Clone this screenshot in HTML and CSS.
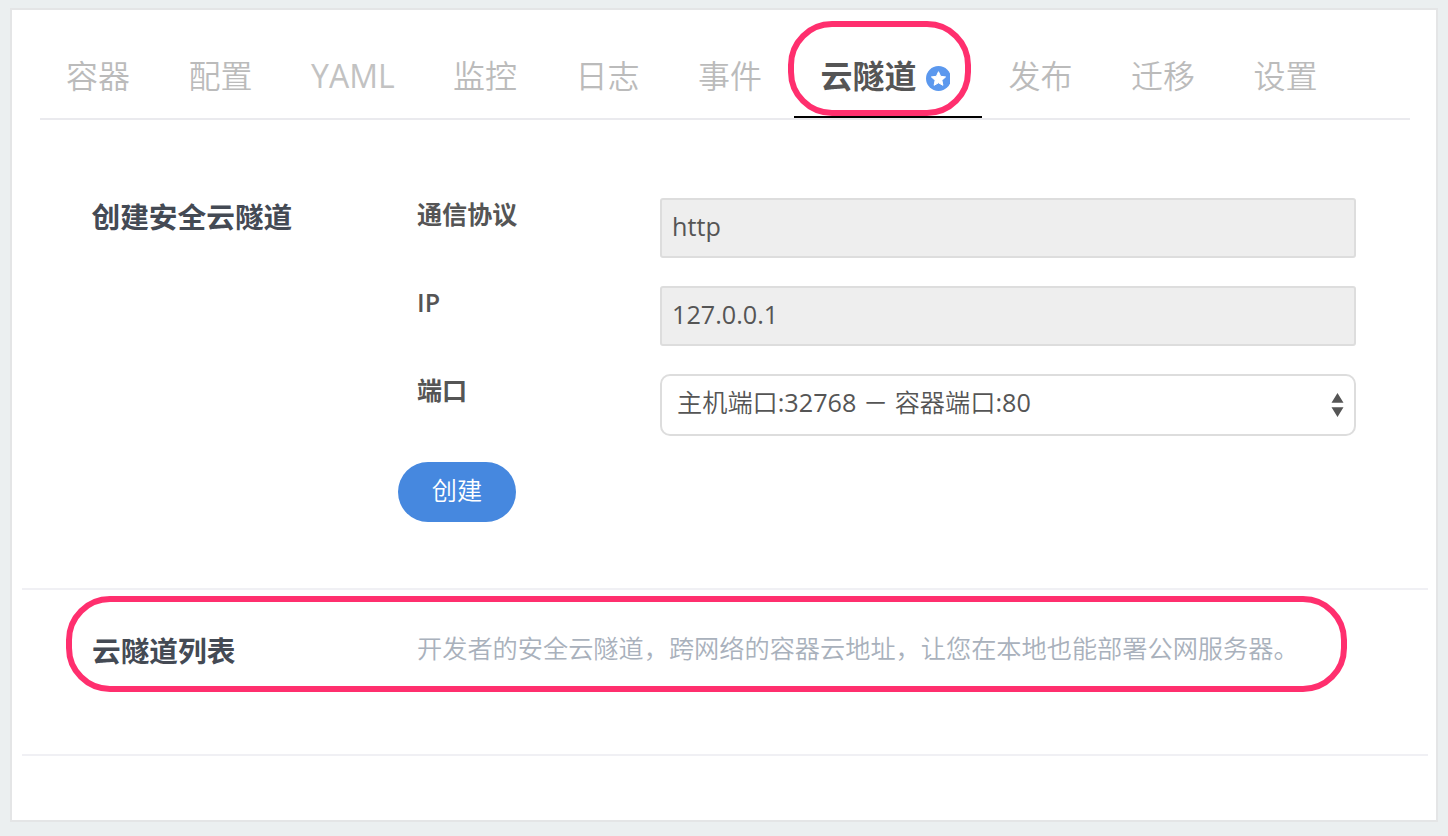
FILE: index.html
```html
<!DOCTYPE html>
<html lang="zh-CN">
<head>
<meta charset="utf-8">
<title>云隧道</title>
<link rel="stylesheet" href="styles.css">
</head>
<body>
<main class="panel">
  <nav class="tabs">
    <a class="tab">容器</a>
    <a class="tab">配置</a>
    <a class="tab latin">YAML</a>
    <a class="tab">监控</a>
    <a class="tab">日志</a>
    <a class="tab">事件</a>
    <a class="tab active">云隧道
      <svg class="star" viewBox="0 0 24 25"><circle cx="12.5" cy="12.5" r="12.5" fill="#5b98ee"/><path d="M12.5 5.7l2.1 4.6 5 .6-3.7 3.4 1 5-4.4-2.5-4.4 2.5 1-5-3.7-3.4 5-.6z" fill="#fff" stroke="#fff" stroke-width="1" stroke-linejoin="round"/></svg>
      <span class="mark mark-tab"></span>
    </a>
    <a class="tab">发布</a>
    <a class="tab">迁移</a>
    <a class="tab">设置</a>
  </nav>
  <section class="create">
    <h2 class="title">创建安全云隧道</h2>
    <form class="form">
      <div class="row"><label class="label">通信协议</label><div class="field">http</div></div>
      <div class="row"><label class="label">IP</label><div class="field">127.0.0.1</div></div>
      <div class="row"><label class="label">端口</label><div class="field select"><span><span class="cjk">主机端口</span>:32768 － <span class="cjk">容器端口</span>:80</span>
        <svg class="arrows" viewBox="0 0 12 24"><path d="M6 0l6 9.7H0zM6 24L0 14.3h12z" fill="#555"/></svg></div></div>
      <button class="button" type="button">创建</button>
    </form>
  </section>
  <section class="list">
    <h2 class="title">云隧道列表</h2>
    <p class="desc">开发者的安全云隧道，跨网络的容器云地址，让您在本地也能部署公网服务器。</p>
    <span class="mark mark-list"></span>
  </section>
</main>
</body>
</html>
```
FILE: styles.css
```css
* { box-sizing: border-box; }
body {
  margin: 0;
  height: 836px;
  padding: 8px 10px 14px;
  background: #ebeff0;
  font-family: "Open Sans", "Noto Sans CJK SC", sans-serif;
  color: #555;
  overflow: hidden;
}
.panel {
  height: 814px;
  padding: 0 8px 0 10px;
  background: #fff;
  border: 2px solid #e4e5e6;
}
.tabs {
  display: flex;
  height: 110px;
  margin: 0 18px;
  border-bottom: 2px solid #eaeaee;
}
.tab {
  position: relative;
  display: flex;
  flex: none;
  height: 108px;
  padding: 42px 27px 0 26px;
  margin-right: 5.5px;
  font-size: 32px;
  line-height: 48px;
  font-weight: 350;
  color: #bbb;
  white-space: nowrap;
}
.latin {
  width: 136.5px;
  font-weight: 400;
  color: #c2c2c2;
}
.active {
  width: 188px;
  margin: 0 0.7px 0 -0.7px;
  padding-left: 26.7px;
  font-weight: 700;
  color: #555;
  border-bottom: 2px solid #000;
}
.star { flex: none; width: 24px; height: 25px; margin: 14px 0 0 9px; }
.mark {
  position: absolute;
  border: 6px solid #ff2f6e;
  pointer-events: none;
}
.mark-tab { left: -6px; top: 11px; width: 183px; height: 95px; border-radius: 44px; }
.create {
  display: flex;
  height: 470px;
  padding: 77px 0 0 70px;
  border-bottom: 2px solid #f0f0f4;
}
.title {
  flex: none;
  width: 325px;
  margin: 0;
  font-size: 28.7px;
  line-height: 40px;
  font-weight: 700;
  color: #444a54;
}
.create .title { margin-left: -0.5px; width: 325.5px; }
.form { flex: none; width: 940px; padding-top: 1px; }
.row { display: flex; height: 60px; margin-bottom: 28px; }
.label {
  width: 243px;
  font-size: 25.1px;
  line-height: 32px;
  font-weight: 600;
}
.field {
  width: 696px;
  height: 60px;
  padding: 0 10px;
  border: 2px solid #ddd;
  border-radius: 3px;
  background: #eee;
  font-size: 25.2px;
  line-height: 53px;
}
.select {
  display: flex;
  justify-content: space-between;
  height: 62px;
  padding: 0 10px 0 15px;
  border-radius: 10px;
  background: #fff;
}
.cjk { font-weight: 350; }
.arrows { width: 13px; height: 24px; margin-top: 17px; }
.button {
  display: block;
  width: 118px;
  height: 60px;
  margin-left: -19px;
  padding: 0 0 4px;
  border: 0;
  border-radius: 30px;
  background: #4688df;
  color: #fff;
  font: 350 25.2px/52px "Open Sans", "Noto Sans CJK SC", sans-serif;
}
.list {
  position: relative;
  display: flex;
  height: 166px;
  padding: 41px 0 0 70px;
  border-bottom: 2px solid #f0f0f4;
}
.desc {
  margin: 0;
  font-size: 25.2px;
  line-height: 34px;
  font-weight: 350;
  color: #a9b1bc;
  white-space: nowrap;
}
.mark-list { left: 43.5px; top: 6px; width: 1281.5px; height: 96px; border-radius: 44px; }
```
